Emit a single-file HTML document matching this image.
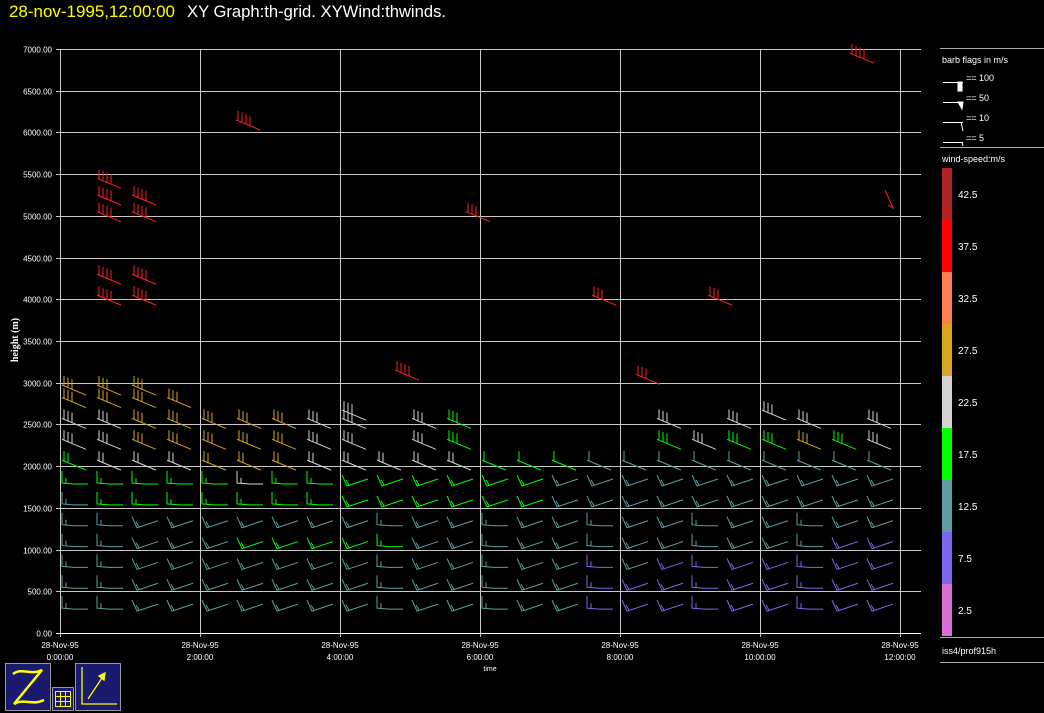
<!DOCTYPE html>
<html><head><meta charset="utf-8"><style>
html,body{margin:0;background:#000;width:1044px;height:713px;overflow:hidden}
svg{display:block;font-family:"Liberation Sans",sans-serif}
</style></head><body>
<svg id="s" width="1044" height="713" xmlns="http://www.w3.org/2000/svg">
<text x="9" y="17" font-size="16.5" fill="#ffff00" textLength="166" lengthAdjust="spacingAndGlyphs">28-nov-1995,12:00:00</text>
<text x="187" y="17" font-size="16.5" fill="#fff" textLength="259" lengthAdjust="spacingAndGlyphs">XY Graph:th-grid.  XYWind:thwinds.</text>
<g id="grid" stroke="#c8c8c8" stroke-width="1"></g>
<line x1="56" y1="633.5" x2="921" y2="633.5" stroke="#fff"/>
<g id="yl" font-size="8" fill="#fff" text-anchor="end"></g>
<text transform="translate(18,340) rotate(-90)" font-size="10" font-weight="bold" fill="#fff" text-anchor="middle" font-family="Liberation Serif,serif">height (m)</text>
<g font-size="8" fill="#fff" text-anchor="middle">
<text x="60" y="648">28-Nov-95</text><text x="60" y="660">0:00:00</text>
<text x="200" y="648">28-Nov-95</text><text x="200" y="660">2:00:00</text>
<text x="340" y="648">28-Nov-95</text><text x="340" y="660">4:00:00</text>
<text x="480" y="648">28-Nov-95</text><text x="480" y="660">6:00:00</text>
<text x="620" y="648">28-Nov-95</text><text x="620" y="660">8:00:00</text>
<text x="760" y="648">28-Nov-95</text><text x="760" y="660">10:00:00</text>
<text x="900" y="648">28-Nov-95</text><text x="900" y="660">12:00:00</text>
<text x="490" y="671" font-size="7">time</text>
</g>
<g id="b" stroke-width="1" fill="none"></g>
<g stroke="#aaa"><line x1="940" y1="48.5" x2="1044" y2="48.5"/><line x1="940" y1="147.5" x2="1044" y2="147.5"/><line x1="940" y1="637.5" x2="1044" y2="637.5"/><line x1="940" y1="662.5" x2="1044" y2="662.5"/></g>
<g font-size="9" fill="#fff">
<text x="942" y="63">barb flags in m/s</text>
<text x="966" y="81">== 100</text><text x="966" y="101">== 50</text>
<text x="966" y="121">== 10</text><text x="966" y="141">== 5</text>
<text x="942" y="162">wind-speed:m/s</text>
<text x="942" y="654">iss4/prof915h</text>
</g>
<g stroke="#fff" fill="#fff">
<line x1="943" y1="82.5" x2="963" y2="82.5"/><rect x="958" y="82" width="4" height="9"/>
<line x1="943" y1="102.5" x2="963" y2="102.5"/><polygon points="958,102 963,102 962,109"/>
<line x1="943" y1="122.5" x2="963" y2="122.5" fill="none"/><line x1="961" y1="122" x2="963" y2="131"/>
<line x1="943" y1="142.5" x2="963" y2="142.5"/><line x1="962" y1="142" x2="963" y2="146"/>
</g>
<g id="cb"></g>
<g font-size="10" fill="#fff">
<text x="958" y="198">42.5</text><text x="958" y="250">37.5</text><text x="958" y="302">32.5</text>
<text x="958" y="354">27.5</text><text x="958" y="406">22.5</text><text x="958" y="458">17.5</text>
<text x="958" y="510">12.5</text><text x="958" y="562">7.5</text><text x="958" y="614">2.5</text>
</g>
<rect x="5.5" y="663.5" width="45" height="47" fill="#1a1a6e" stroke="#999"/>
<path d="M13,674 C22,667 30,676 42,670 L14,704 C24,698 32,706 44,700" stroke="#ffff00" stroke-width="2.5" fill="none"/>
<rect x="52.5" y="687.5" width="21" height="23" fill="#1a1a6e" stroke="#999"/>
<g stroke="#ffff00" fill="none"><rect x="55.5" y="691.5" width="15" height="15"/><path d="M60.5,691v15M65.5,691v15M55,696.5h15M55,701.5h15"/></g>
<rect x="75.5" y="663.5" width="45" height="47" fill="#1a1a6e" stroke="#999"/>
<g stroke="#ffff00" fill="none" stroke-width="1.3"><path d="M82,667v37h35"/><path d="M88,699L104,675"/><path d="M99,676l6,-3l-1,7z" fill="#ffff00"/></g>
</svg>
<script>
var NS="http://www.w3.org/2000/svg";
function el(p,t,a){var e=document.createElementNS(NS,t);for(var k in a)e.setAttribute(k,a[k]);p.appendChild(e);return e}
var g=document.getElementById("grid"),yl=document.getElementById("yl");
function Y(h){return 633-h*584/7000}
for(var i=0;i<=14;i++){var y=Math.round(Y(i*500))+.5;el(g,"line",{x1:56,y1:y,x2:921,y2:y});var t=el(yl,"text",{x:52,y:y+3});t.textContent=(i*500).toFixed(2)}
for(var i=0;i<=6;i++){var x=60+140*i+.5;el(g,"line",{x1:x,y1:49,x2:x,y2:637})}
var cols=["#b22222","#ff0000","#ff7f50","#daa520","#d3d3d3","#00ff00","#5f9ea0","#7b68ee","#da70d6"];
var cb=document.getElementById("cb");
cols.forEach(function(c,i){el(cb,"rect",{x:942,y:168+i*52,width:10,height:52,fill:c})});
var b=document.getElementById("b");
var T="#5f9ea0",B="#7b68ee",G="#00ff00",W="#d3d3d3",O="#daa520",R="#ff2020";
function barb(x,y,c,type,n){
  var d="";
  if(type==0){
    d="M"+x+","+(y-12)+"V"+y+"L"+(x+12)+","+(y+1)+"L"+(x+26)+","+(y+1)+" M"+(x+4)+","+(y-5)+"V"+y;
  } else if(type==1){
    d="M"+x+","+(y-8)+"L"+(x+5)+","+(y+3)+"L"+(x+26)+","+(y-4)+" M"+(x+4)+","+(y-3)+"L"+(x+7)+","+(y+2);
  } else {
    d="M"+x+","+y+"L"+(x+24)+","+(y+10);
    for(var k=0;k<n;k++){var fx=x+2+k*4,fy=y+1+k*1.6;d+="M"+fx+","+fy+"L"+fx+","+(fy-10)}
  }
  el(b,"path",{d:d,stroke:c});
}
for(var i=0;i<24;i++){
  var x=62+35*i;
  [250,500,750,1000,1250].forEach(function(h,r){
    var y=Y(h)-4,c=T;
    if(i>=15&&h<=750&&!(i==16&&h==750))c=B;
    if(i>=22&&h<=1000)c=B;
    if(i>=5&&i<=9&&h>=750&&h<=1000&&r%2)c=G;
    barb(x,y,c,(i<2||(i%3==0&&i>8))?0:1,2);
  });
  [1500,1750].forEach(function(h){
    var y=Y(h)-4,c=(i<=13&&!(i==0))?G:T;if(i==0&&h==1750)c=G;if(i==5&&h==1750)c=W;
    barb(x,y,c,i<8?0:1,2);
  });
  [2000].forEach(function(h){
    var y=Y(h)-6,c=i<=3?W:(i<=6?O:(i<=11?W:(i<=14?G:T)));if(i==0)c=G;
    barb(x,y,c,2,i<12?2:1);
  });
  [2250,2500].forEach(function(h){
    var y=Y(h)-6,c=null;
    if(i<=1)c=W;else if(i<=6)c=O;else if(i<=8)c=W;else if(i==10)c=W;else if(i==11)c=G;
    else if(i>=17){c=[G,G,W,G,G,O,G,W][i-16]||G;if(h==2500)c=(i%2)?W:null}
    if(i==8&&h==2500)c=W;
    if(c)barb(x,y,c,2,3);
  });
  if(i<=3){barb(x,Y(2750)-6,O,2,3);if(i<=2)barb(x,Y(2900)-6,O,2,3)}
}
barb(342,Y(2600)-6,W,2,3);barb(762,Y(2600)-6,W,2,3);
[[97,4300],[132,4300],[97,4050],[132,4050],[97,5450],[97,5250],[132,5250],[97,5050],[132,5050],[236,6150]].forEach(function(p){barb(p[0],Y(p[1]),R,2,4)});
barb(395,Y(3150),R,2,4);barb(592,Y(4050),R,2,3);barb(708,Y(4050),R,2,3);barb(636,Y(3100),R,2,3);
barb(850,Y(6950),R,2,4);barb(466,Y(5050),R,2,3);
el(b,"path",{d:"M885,190L893,208L888,205",stroke:R});
</script>
</body></html>
